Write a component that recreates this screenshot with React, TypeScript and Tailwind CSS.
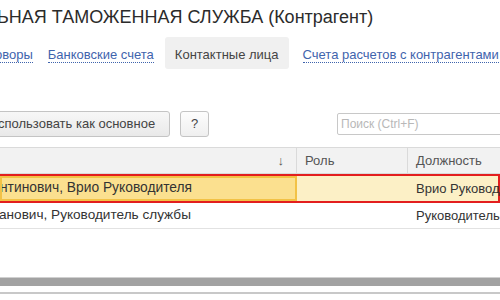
const FONT = { fontFamily: '"Liberation Sans", Arial, sans-serif' }

function Link({ children, className = '' }: { children: React.ReactNode; className?: string }) {
  return (
    <span className={`shrink-0 text-[#3f64ad] border-b border-dotted border-[#3f64ad] leading-[15px] ${className}`}>
      {children}
    </span>
  )
}

export default function App() {
  return (
    <div className="w-[500px] h-[300px] overflow-hidden bg-white relative text-[#333]" style={FONT}>
      {/* Title */}
      <div className="h-[37px] pt-[6px] whitespace-nowrap">
        <span className="ml-[-3px] text-[18px] leading-[22px] text-[#2b2b2b]">ЬНАЯ ТАМОЖЕННАЯ СЛУЖБА (Контрагент)</span>
      </div>

      {/* Tabs */}
      <div className="h-[32px] flex items-center whitespace-nowrap text-[13px] pt-[3px]">
        <Link className="ml-[-5px]">оворы</Link>
        <Link className="ml-[15px]">Банковские счета</Link>
        <div className="shrink-0 ml-[11px] h-[32px] mt-[-3px] px-[10px] bg-[#f0f0f0] rounded-[3px] flex items-center pt-[3px] text-[#444]">
          Контактные лица
        </div>
        <Link className="ml-[14px]">Счета расчетов с контрагентами</Link>
      </div>

      {/* Command bar */}
      <div className="mt-[42px] h-[26px] flex items-center whitespace-nowrap text-[13px]">
        <div className="shrink-0 ml-[-8px] w-[178px] h-[26px] border border-[#c4c4c4] rounded-[3px] bg-gradient-to-b from-[#f7f7f7] to-[#e9e9e9] flex items-center pl-[5px] text-[#444]">
          спользовать как основное
        </div>
        <div className="shrink-0 ml-[10px] w-[29px] h-[26px] border border-[#c4c4c4] rounded-[3px] bg-gradient-to-b from-[#fdfdfd] to-[#efefef] flex items-center justify-center text-[#444]">
          ?
        </div>
        <div className="shrink-0 ml-[128px] w-[200px] h-[22px] border border-[#c8c8c8] rounded-[2px] flex items-center pl-[3px] text-[#b8b8b8] text-[12px]">
          Поиск (Ctrl+F)
        </div>
      </div>

      {/* Table */}
      <div className="mt-[10px] text-[13px] whitespace-nowrap">
        <div className="h-[27px] flex bg-[#f2f2f2] border-t border-b border-[#dadada] text-[#555]">
          <div className="shrink-0 w-[297px] border-r border-[#dadada] flex items-center justify-end pr-[12px]">↓</div>
          <div className="shrink-0 w-[111px] border-r border-[#dadada] flex items-center pl-[8px]">Роль</div>
          <div className="shrink-0 w-[200px] flex items-center pl-[8px]">Должность</div>
        </div>
        <div className="h-[29px] flex bg-[#fcf0c6] border-y-2 border-r-2 border-[#e31e1e] text-[#333]">
          <div className="shrink-0 w-[297px] bg-[#fbe08f] border-2 border-[#f2c246] flex items-center overflow-hidden">
            <span className="ml-[-2px] text-[13.8px]">нтинович, Врио Руководителя</span>
          </div>
          <div className="shrink-0 w-[111px]"></div>
          <div className="shrink-0 w-[200px] flex items-center pl-[8px]">Врио Руководителя</div>
        </div>
        <div className="h-[26px] flex border-b border-[#e2e2e2] text-[#333]">
          <div className="shrink-0 w-[408px] flex items-center">
            <span className="ml-[-1px] text-[13.6px]">анович, Руководитель службы</span>
          </div>
          <div className="shrink-0 w-[200px] flex items-center pl-[8px]">Руководитель службы</div>
        </div>
      </div>

      {/* Scrollbar */}
      <div className="mt-[48px] h-[9px] bg-[#a2a2a2] border-t border-[#d0d0d0]"></div>
      <div className="mt-[6px] h-[2px] bg-[#c8c8c8]"></div>
    </div>
  )
}
